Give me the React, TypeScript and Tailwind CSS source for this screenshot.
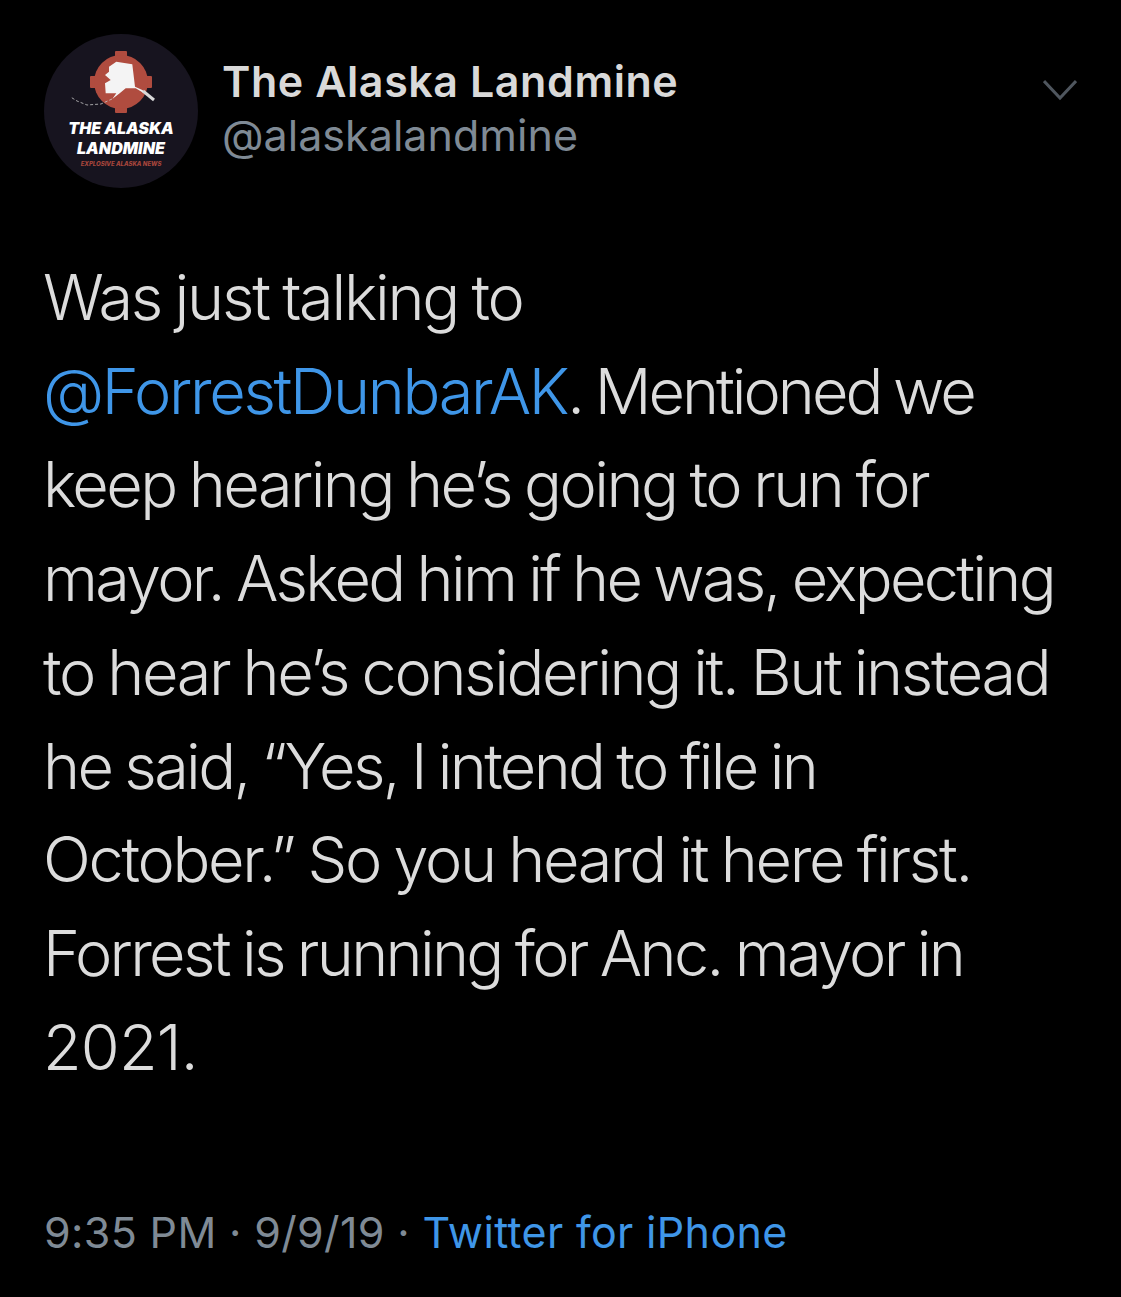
export default function App() {
  const f = { fontFamily: 'Inter, "Liberation Sans", sans-serif' };
  return (
    <div className="w-[1121px] h-[1297px] bg-black overflow-hidden flex flex-col" style={f}>
      <div className="flex items-start pl-[44px] pt-[34px] pr-[44px]">
        <div className="w-[154px] h-[154px] rounded-full bg-[#17141f] shrink-0 flex flex-col items-center">
          <svg width="100" height="76" viewBox="-12 0 100 76" className="mt-[10px] shrink-0">
            <rect x="32" y="7" width="12" height="62" fill="#b04c3f" rx="1" />
            <rect x="7" y="32" width="62" height="12" fill="#b04c3f" rx="1" />
            <circle cx="38" cy="38" r="27" fill="#b04c3f" />
            <path d="M26 22.7 L33.3 17.7 L49.3 20.3 L52 42.7 L59.3 46 L71 56 L61 49.3 L52.7 44.3 L42.7 44.3 L36.7 49.3 L29.3 55 L33.3 49.3 L22.7 49.3 L22 39.3 L27.7 36 L22 31 L26 27.7 Z" fill="#f4f4f4" />
            <path d="M60 47 L71 56" stroke="#d8d8d8" strokeWidth="3" />
            <path d="M29 55 L18 60 L4 61 L-6 57 L-14 52" stroke="#c8c8c8" strokeWidth="0.8" strokeDasharray="3 2" fill="none" />
          </svg>
          <div className="text-white font-black italic text-[16px] leading-[20px] text-center mt-[-2px]">THE ALASKA<br />LANDMINE</div>
          <div className="text-[#a8463c] font-extrabold italic text-[6px] leading-[10px] mt-[1px]">EXPLOSIVE ALASKA NEWS</div>
        </div>
        <div className="ml-[26px] mt-[20px] flex-1">
          <div className="text-[#d9d9d9] font-semibold text-[43px] leading-[54px] tracking-[0.56px] ml-[-2px]">The Alaska Landmine</div>
          <div className="text-[#7f8a95] text-[43px] leading-[54px] tracking-[0.03px] ml-[-2px]">@alaskalandmine</div>
        </div>
        <svg width="34" height="22" viewBox="0 0 34 22" className="mt-[45px] shrink-0" fill="none" stroke="#4f565e" strokeWidth="3">
          <path d="M1 2 L17 19 L33 2" />
        </svg>
      </div>
      <div className="mt-[63px] pl-[43px] text-[#dcdcdc] text-[63px] leading-[93.7px] font-light whitespace-nowrap [word-spacing:-2px]">
        <div className="tracking-[-2.25px]">Was just talking to</div>
        <div className="tracking-[-3px]"><span className="text-[#3f96e8] tracking-[-2.35px]">@ForrestDunbarAK</span>. Mentioned we</div>
        <div className="tracking-[-2.55px]">keep hearing he’s going to run for</div>
        <div className="tracking-[-2.72px]">mayor. Asked him if he was, expecting</div>
        <div className="tracking-[-2.37px]">to hear he’s considering it. But instead</div>
        <div className="tracking-[-2.67px]">he said, “Yes, I intend to file in</div>
        <div className="tracking-[-2.3px]">October.” So you heard it here first.</div>
        <div className="tracking-[-2.68px]">Forrest is running for Anc. mayor in</div>
        <div className="tracking-[-0.8px]">2021.</div>
      </div>
      <div className="mt-[111px] pl-[44px] text-[43px] leading-[54px] text-[#7f8a95] whitespace-nowrap tracking-[0.35px]">
        9:35 PM · 9/9/19 · <span className="text-[#3f96e8]">Twitter for iPhone</span>
      </div>
    </div>
  );
}
